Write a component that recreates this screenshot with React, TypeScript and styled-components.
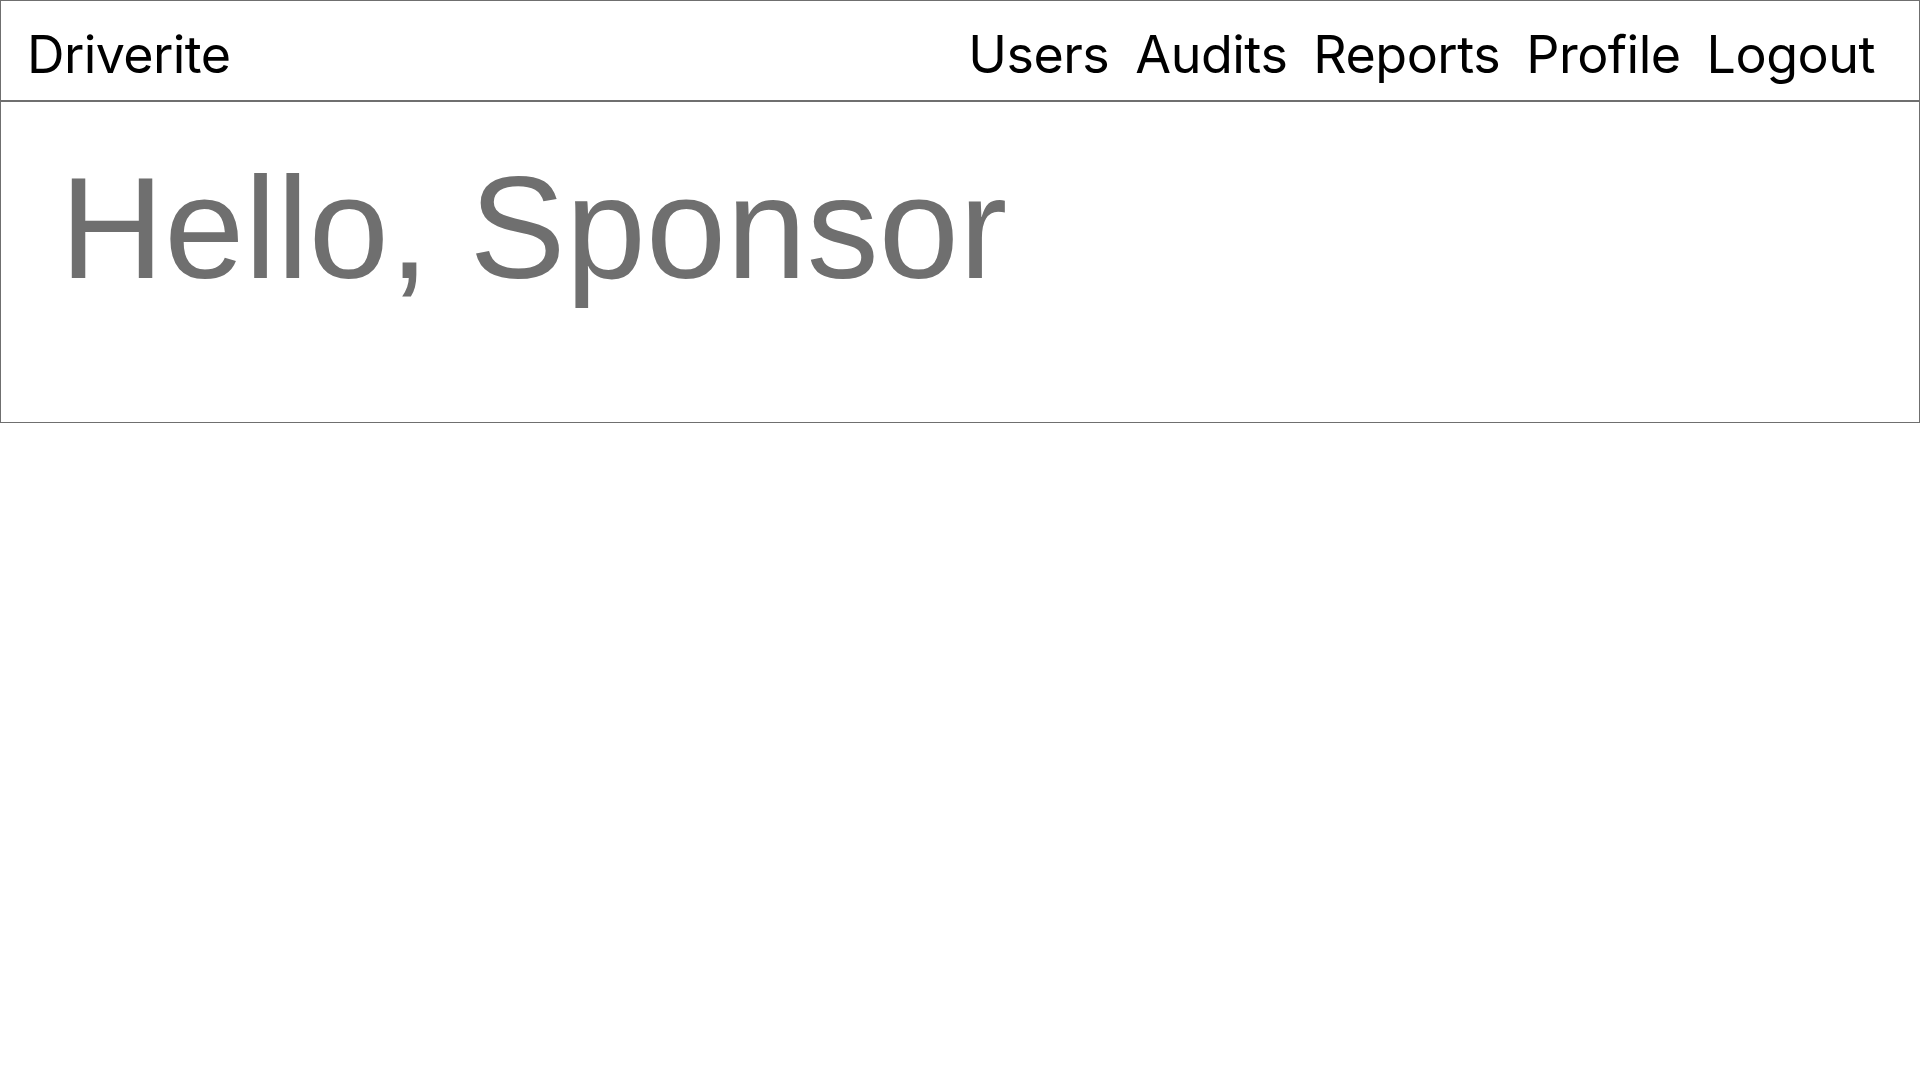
import React from "react";
import styled, { createGlobalStyle } from "styled-components";

const Global = createGlobalStyle`
  html, body { margin: 0; padding: 0; background: #ffffff; }
  * { box-sizing: border-box; }
`;

const Header = styled.header`
  height: 101px;
  border: 1px solid #6f6f6f;
  display: flex;
  align-items: center;
  justify-content: space-between;
  padding: 7px 44px 0 26px;
  font-family: Inter, "Liberation Sans", sans-serif;
  font-size: 52px;
  color: #000;
`;

const Brand = styled.div`
  letter-spacing: -0.6px;
`;

const Nav = styled.nav`
  display: flex;
  gap: 26px;
`;

const NavLink = styled.a`
  color: #000;
  text-decoration: none;
  letter-spacing: -0.5px;
  cursor: pointer;
`;

const Main = styled.main`
  height: 322px;
  border: 1px solid #6f6f6f;
  padding: 55px 0 0 59px;
`;

const Greeting = styled.h1`
  margin: 0;
  font-family: "Liberation Sans", Arial, sans-serif;
  font-weight: 400;
  font-size: 144px;
  line-height: 144px;
  letter-spacing: 0.2px;
  color: #6f6f6f;
`;

export default function App() {
  const links = ["Users", "Audits", "Reports", "Profile", "Logout"];
  return (
    <>
      <Global />
      <Header>
        <Brand>Driverite</Brand>
        <Nav>
          {links.map((l) => (
            <NavLink key={l}>{l}</NavLink>
          ))}
        </Nav>
      </Header>
      <Main>
        <Greeting>Hello, Sponsor</Greeting>
      </Main>
    </>
  );
}
